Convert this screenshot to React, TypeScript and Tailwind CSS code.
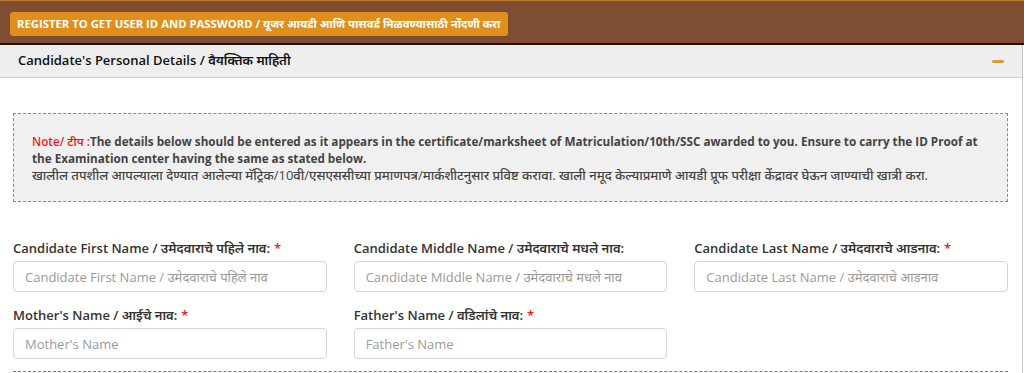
const fontStack = "font-['Open_Sans','Noto_Sans',sans-serif]";

interface FieldProps {
  label: string;
  placeholder: string;
  required?: boolean;
}

function Field({ label, placeholder, required }: FieldProps) {
  return (
    <div className="flex flex-col">
      <label className="text-[13px] font-semibold text-[#333] leading-[18px] mb-[4px] whitespace-nowrap">
        {label}
        {required && <span className="text-[#e0201a] ml-1">*</span>}
      </label>
      <input
        type="text"
        placeholder={placeholder}
        className="h-[31px] w-full rounded-[4px] border border-[#d4d4d4] bg-white px-[11px] text-[13px] text-[#555] placeholder:text-[#9a9a9a] outline-none"
      />
    </div>
  );
}

export default function App() {
  return (
    <div className={`${fontStack} w-[1024px] h-[373px] overflow-hidden bg-white`}>
      {/* Top bar */}
      <div className="h-[45px] bg-[#7f4d31] border-t border-t-[#c17a2a] border-b-2 border-b-[#1c1208] px-[10px] pt-[9px]">
        <button className="h-[24px] rounded-[3px] bg-[#e08f1d] pl-[7px] pr-[8px] text-[11.3px] font-bold text-white leading-[24px] whitespace-nowrap">
          REGISTER TO GET USER ID AND PASSWORD / यूजर आयडी आणि पासवर्ड मिळवण्यासाठी नोंदणी करा
        </button>
      </div>

      <div className="w-[1023px] border-r border-[#c8c8c8] h-full">
        {/* Section header */}
        <div className="h-[33px] bg-[#eeeeee] border-b border-[#cfcfcf] flex items-center justify-between pl-[18px] pr-[18px]">
          <h2 className="text-[13px] font-semibold text-[#111]">
            Candidate's Personal Details / वैयक्तिक माहिती
          </h2>
          <span className="block w-[12px] h-[3px] bg-[#e09a2a] rounded-sm" />
        </div>

        <div className="px-[13px] pr-[14px]">
          {/* Note */}
          <div className="mt-[35px] border border-dashed border-[#8a8a8a] bg-[#f0f0f0] pl-[18px] pr-[16px] pt-[19px] pb-[17px] text-[11.7px] leading-[17px] text-[#444]">
            <p className="font-bold">
              <span className="text-[#ee1c1c] font-semibold">Note/ टीप :</span>
              The details below should be entered as it appears in the certificate/marksheet of Matriculation/10th/SSC awarded to you. Ensure to carry the ID Proof at
              <br />
              the Examination center having the same as stated below.
            </p>
            <p className="text-[13px] font-medium">
              खालील तपशील आपल्याला देण्यात आलेल्या मॅट्रिक/10वी/एसएससीच्या प्रमाणपत्र/मार्कशीटनुसार प्रविष्ट करावा. खाली नमूद केल्याप्रमाणे आयडी प्रूफ परीक्षा केंद्रावर घेऊन जाण्याची खात्री करा.
            </p>
          </div>

          {/* Form */}
          <div className="mt-[37px] grid grid-cols-3 gap-x-[27px] gap-y-[14px]">
            <Field
              label="Candidate First Name / उमेदवाराचे पहिले नाव:"
              placeholder="Candidate First Name / उमेदवाराचे पहिले नाव"
              required
            />
            <Field
              label="Candidate Middle Name / उमेदवाराचे मधले नाव:"
              placeholder="Candidate Middle Name / उमेदवाराचे मधले नाव"
            />
            <Field
              label="Candidate Last Name / उमेदवाराचे आडनाव:"
              placeholder="Candidate Last Name / उमेदवाराचे आडनाव"
              required
            />
            <Field label="Mother's Name / आईचे नाव:" placeholder="Mother's Name" required />
            <Field label="Father's Name / वडिलांचे नाव:" placeholder="Father's Name" required />
          </div>

          <div className="mt-[12px] border-t border-dashed border-[#777]" />
        </div>
      </div>
    </div>
  );
}
